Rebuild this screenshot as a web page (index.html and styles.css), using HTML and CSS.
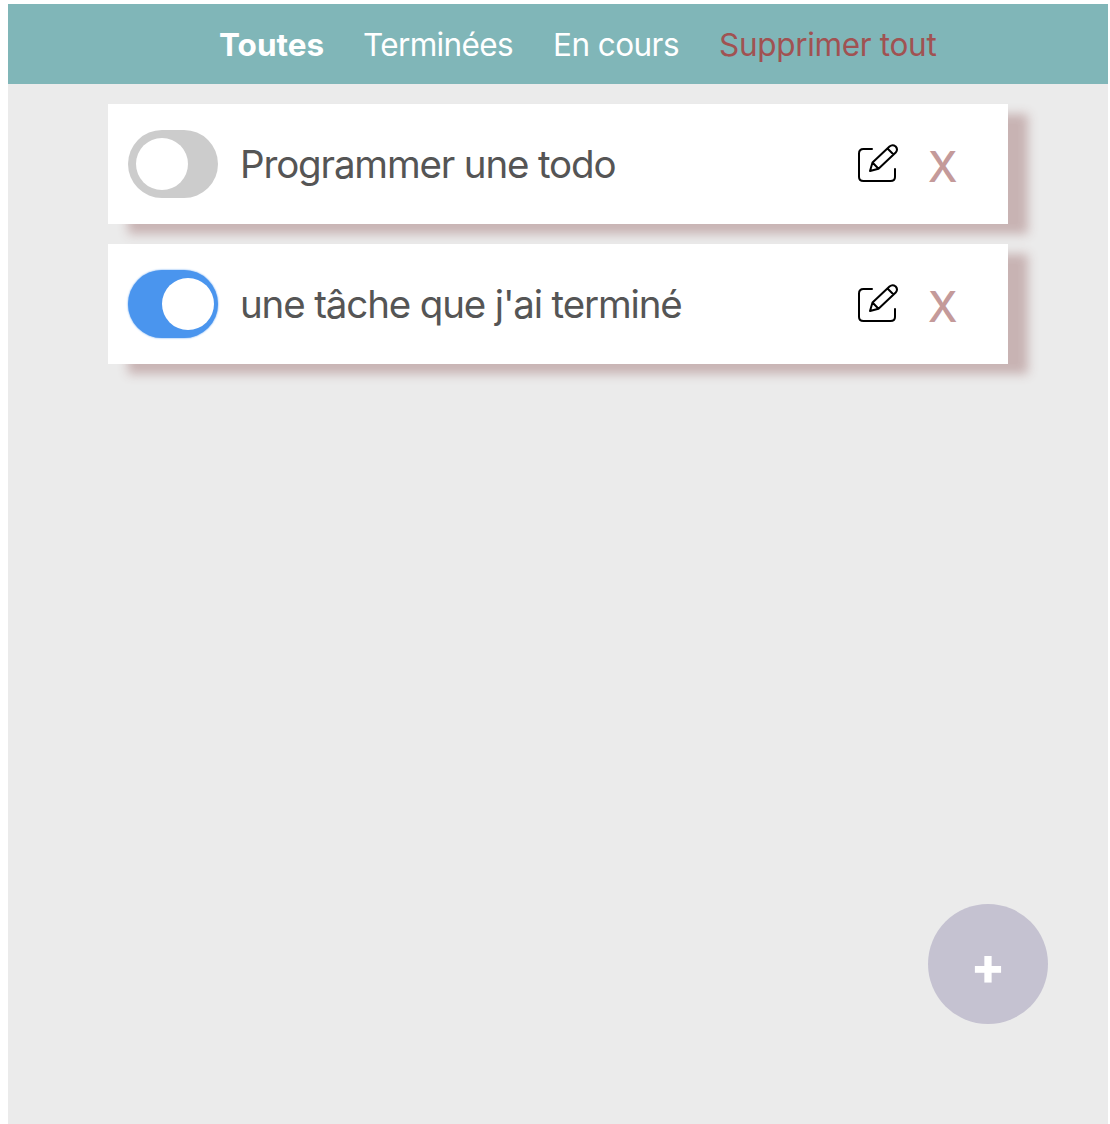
FILE: index.html
```html
<!DOCTYPE html>
<html lang="fr">
<head>
<meta charset="utf-8">
<title>Todo</title>
<link rel="stylesheet" href="styles.css">
</head>
<body>
<div class="app">
  <nav class="filters">
    <a class="filter filter-all">Toutes</a>
    <a class="filter filter-done">Terminées</a>
    <a class="filter filter-current">En cours</a>
    <a class="filter filter-delete">Supprimer tout</a>
  </nav>
  <main class="todos">
    <article class="todo">
      <span class="switch"><span class="knob"></span></span>
      <span class="label">Programmer une todo</span>
      <svg class="edit" viewBox="0 0 44 44" fill="none" stroke="#000" stroke-width="2" stroke-linecap="round" stroke-linejoin="round">
        <path d="M16 7H7.500Q3 7 3 11.500V35Q3 39 7.500 39H34.500Q39 39 39 35V27"/>
        <path d="M14 29L16.500 20.500L33.500 4.500Q36.500 2 39.700 4.500Q42.300 7.500 39.700 10.500L22.500 26.700ZM16.500 20.500L22.500 26.700M31.500 6.500L37.500 12.500"/>
      </svg>
      <span class="remove">X</span>
    </article>
    <article class="todo">
      <span class="switch switch-on"><span class="knob"></span></span>
      <span class="label">une tâche que j'ai terminé</span>
      <svg class="edit" viewBox="0 0 44 44" fill="none" stroke="#000" stroke-width="2" stroke-linecap="round" stroke-linejoin="round">
        <path d="M16 7H7.500Q3 7 3 11.500V35Q3 39 7.500 39H34.500Q39 39 39 35V27"/>
        <path d="M14 29L16.500 20.500L33.500 4.500Q36.500 2 39.700 4.500Q42.300 7.500 39.700 10.500L22.500 26.700ZM16.500 20.500L22.500 26.700M31.500 6.500L37.500 12.500"/>
      </svg>
      <span class="remove">X</span>
    </article>
  </main>
  <button class="add">+</button>
</div>
</body>
</html>
```
FILE: styles.css
```css
* { box-sizing: border-box; }
body {
  margin: 0;
  padding: 4px 2px 0 8px;
  background: #fff;
  font-family: Inter, sans-serif;
}
.app {
  display: flex;
  flex-direction: column;
  height: 1120px;
  background: #ebebeb;
}
.filters {
  display: grid;
  grid-template-columns: 144px 190px 166px 218px;
  align-items: center;
  height: 80px;
  padding: 2px 0 0 211px;
  background: #80b6b8;
  color: #fff;
  font-size: 31.5px;
  line-height: 40px;
  white-space: nowrap;
}
.filter-all { font-weight: 700; }
.filter-done { letter-spacing: -0.65px; }
.filter-current { letter-spacing: -0.55px; }
.filter-delete { color: #a05252; letter-spacing: -0.32px; }
.todos {
  display: flex;
  flex-direction: column;
  gap: 20px;
  padding: 20px 100px 0;
}
.todo {
  display: flex;
  align-items: center;
  height: 120px;
  padding: 0 52px 0 20px;
  background: #fff;
  box-shadow: 20px 10px 10px #c8b3b3;
}
.switch {
  flex: none;
  width: 90px;
  height: 68px;
  padding: 8px;
  border-radius: 34px;
  background: #ccc;
}
.knob {
  display: block;
  width: 52px;
  height: 52px;
  border-radius: 50%;
  background: #fff;
}
.switch-on {
  padding-left: 34px;
  background: #4a95ee;
  box-shadow: 0 0 2px #4a95ee;
}
.label {
  flex: 1;
  margin-left: 22px;
  color: #555;
  font-size: 38.5px;
  letter-spacing: -1.15px;
  line-height: 48px;
  white-space: nowrap;
}
.edit {
  flex: none;
  width: 44px;
  height: 44px;
  margin-right: 28px;
}
.remove {
  width: 28px;
  padding-top: 5px;
  color: #c49a9a;
  font-size: 42px;
  font-weight: 500;
  line-height: 50px;
}
.add {
  width: 120px;
  height: 120px;
  margin: auto 60px 100px auto;
  padding: 2px 0 0;
  border: 0;
  border-radius: 50%;
  background: #c5c2d1;
  color: #fff;
  font: 800 51px Inter, sans-serif;
}
```
